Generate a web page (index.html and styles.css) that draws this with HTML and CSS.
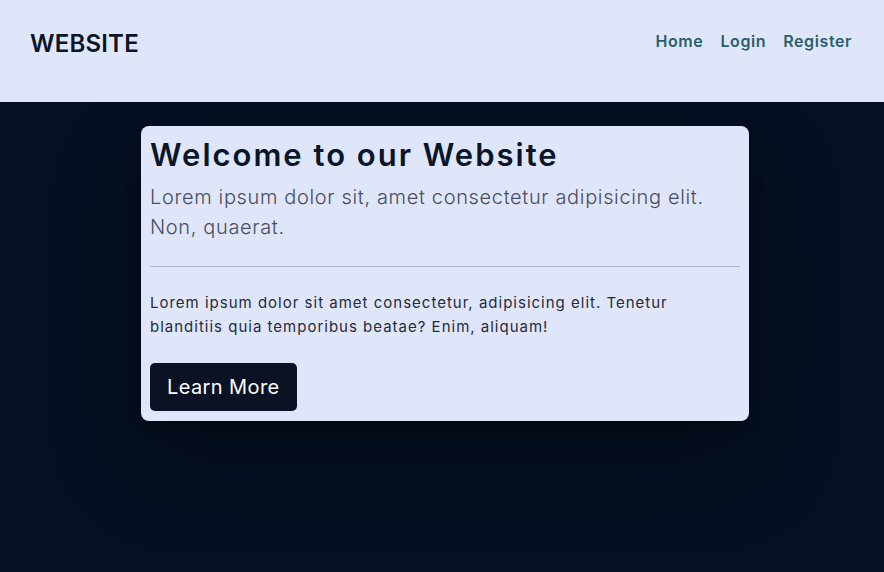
FILE: index.html
```html
<!DOCTYPE html>
<html lang="en">
<head>
<meta charset="utf-8">
<title>Website</title>
<link rel="stylesheet" href="styles.css">
</head>
<body>
<header class="site-header">
  <div class="brand">WEBSITE</div>
  <nav class="nav">
    <a href="#" class="nav-link">Home</a>
    <a href="#" class="nav-link">Login</a>
    <a href="#" class="nav-link">Register</a>
  </nav>
</header>
<main class="main">
  <section class="card">
    <h1 class="title">Welcome to our Website</h1>
    <p class="lead">Lorem ipsum dolor sit, amet consectetur adipisicing elit. Non, quaerat.</p>
    <hr class="divider">
    <p class="text">Lorem ipsum dolor sit amet consectetur, adipisicing elit. Tenetur blanditiis quia temporibus beatae? Enim, aliquam!</p>
    <a href="#" class="btn">Learn More</a>
  </section>
</main>
</body>
</html>
```

FILE: styles.css
```css
* { box-sizing: border-box; }
html, body { height: 100%; }
body {
  margin: 0;
  background: #061022;
  font-family: Inter, "Noto Sans", sans-serif;
  color: #0a1628;
}
.site-header {
  position: relative;
  z-index: 2;
  height: 102px;
  background: #e0e6fa;
  display: flex;
  align-items: flex-start;
  justify-content: space-between;
  padding: 30px 32px 0 30px;
}
.brand {
  font-size: 24px;
  line-height: 28px;
  font-weight: 600;
  color: #0a1628;
  letter-spacing: 0.2px;
}
.nav { display: flex; gap: 17px; }
.nav-link {
  color: #2a5e6a;
  text-decoration: none;
  font-size: 16px;
  line-height: 22px;
  font-weight: 600;
  letter-spacing: 0.6px;
}
.main {
  display: flex;
  padding: 24px 135px 0 141px;
}
.card {
  flex: 1;
  background: #e0e6fa;
  border-radius: 8px;
  padding: 8px 9px 10px;
  box-shadow: 0 40px 90px rgba(0, 0, 0, 0.28), 0 4px 14px rgba(0, 0, 0, 0.35);
}
.title {
  margin: 0;
  font-size: 31px;
  font-weight: 600;
  line-height: 41px;
  letter-spacing: 2px;
  color: #0a1628;
}
.lead {
  margin: 7px 0 0;
  font-size: 20px;
  font-weight: 300;
  line-height: 30px;
  letter-spacing: 0.65px;
  color: #484e5e;
}
.divider {
  margin: 24px 0 24px;
  border: 0;
  border-top: 1px solid #b0b4c4;
}
.text {
  margin: 0;
  font-size: 15px;
  line-height: 24px;
  letter-spacing: 1px;
  color: #262b38;
}
.btn {
  display: inline-block;
  margin-top: 24px;
  background: #0a1224;
  color: #ffffff;
  text-decoration: none;
  font-size: 20px;
  line-height: 48px;
  height: 48px;
  padding: 0 17px;
  border-radius: 5px;
  letter-spacing: 0.4px;
}
```
